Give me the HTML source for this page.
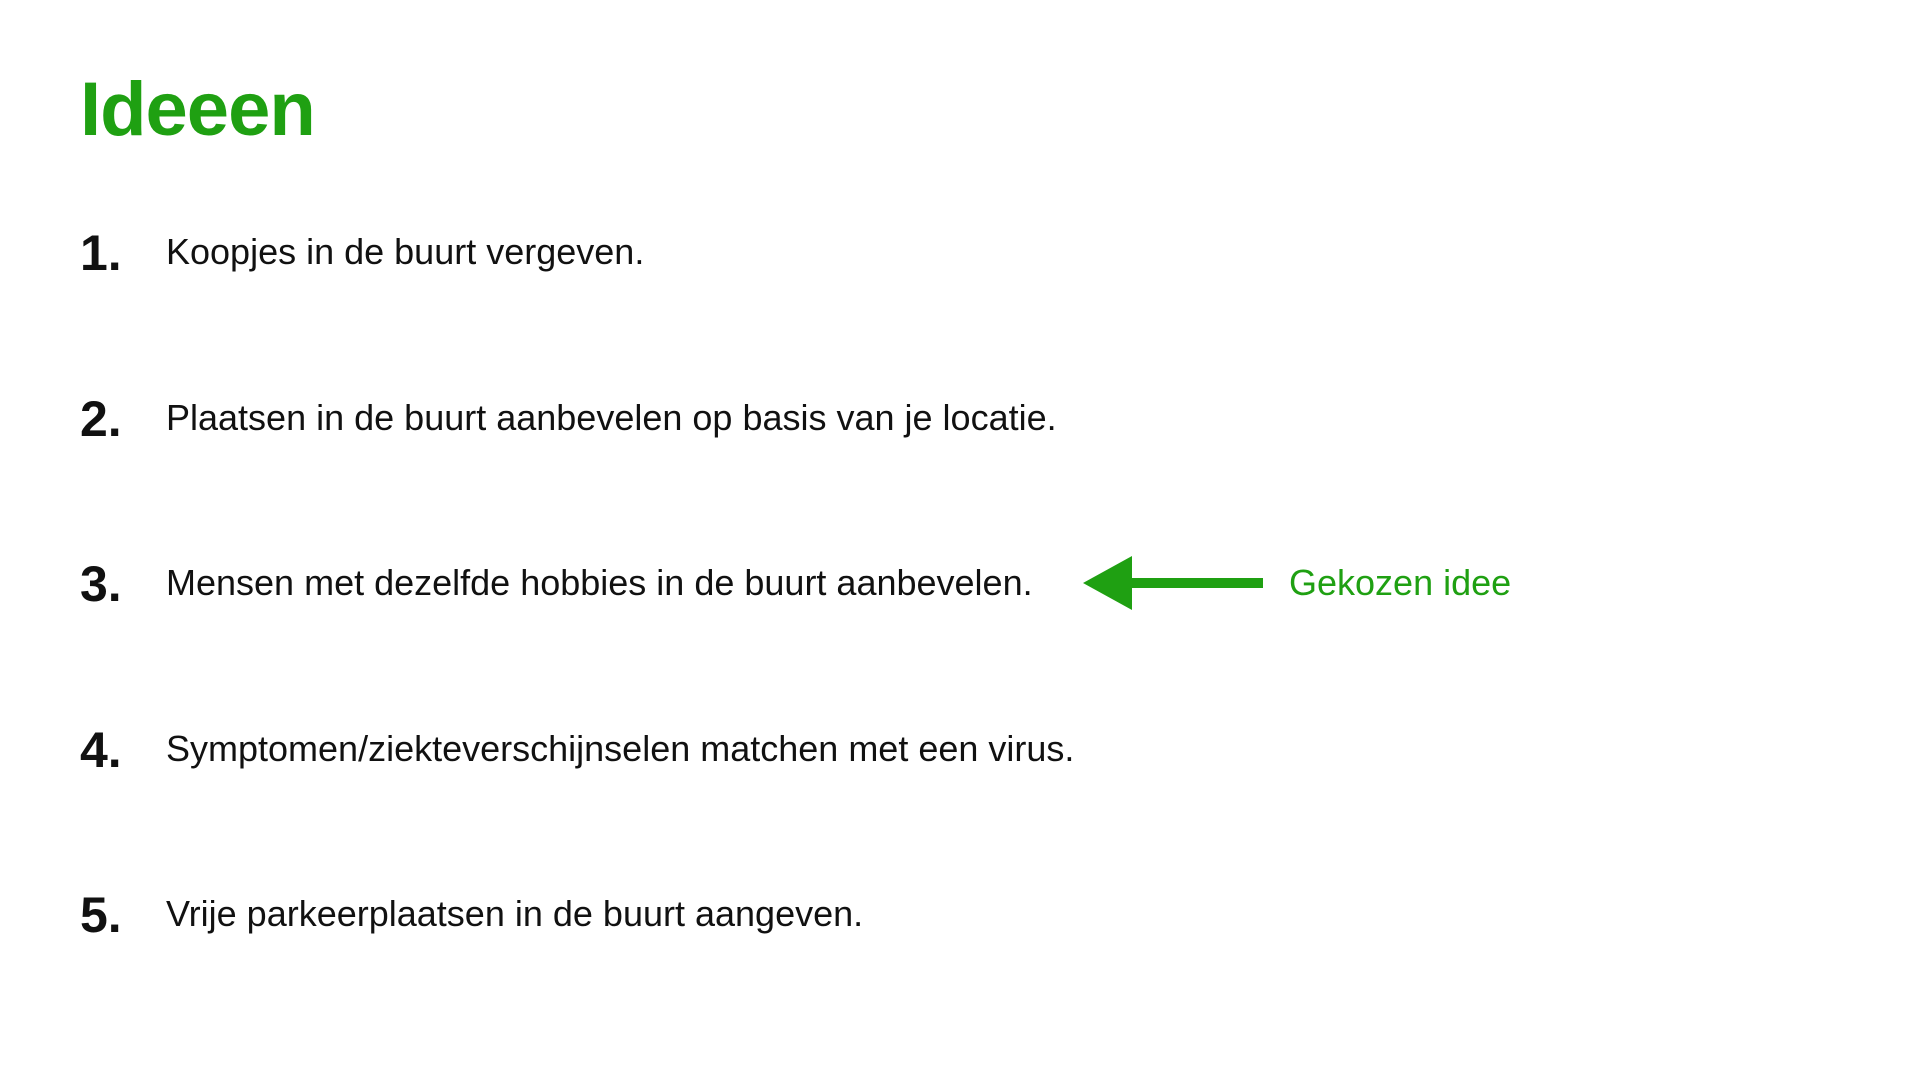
<!DOCTYPE html>
<html><head><meta charset="utf-8"><style>
html,body{margin:0;padding:0;width:1920px;height:1080px;background:#fff;overflow:hidden;font-family:"Liberation Sans",sans-serif;}
.t{position:absolute;left:80px;top:66px;font-size:76px;font-weight:bold;color:#1fa012;letter-spacing:-1px;}
.n{position:absolute;left:80px;font-size:50px;font-weight:bold;color:#111;line-height:1;}
.x{position:absolute;left:166px;font-size:36px;color:#111;line-height:1;}
.g{position:absolute;left:1289px;font-size:36px;color:#1fa012;line-height:1;}
</style></head><body>
<div class="t">Ideeen</div>
<div class="n" style="top:228px">1.</div><div class="x" style="top:234px">Koopjes in de buurt vergeven.</div>
<div class="n" style="top:394px">2.</div><div class="x" style="top:400px">Plaatsen in de buurt aanbevelen op basis van je locatie.</div>
<div class="n" style="top:559px">3.</div><div class="x" style="top:565px">Mensen met dezelfde hobbies in de buurt aanbevelen.</div>
<div class="n" style="top:725px">4.</div><div class="x" style="top:731px">Symptomen/ziekteverschijnselen matchen met een virus.</div>
<div class="n" style="top:890px">5.</div><div class="x" style="top:896px">Vrije parkeerplaatsen in de buurt aangeven.</div>
<svg style="position:absolute;left:0;top:0" width="1920" height="1080">
<polygon points="1083,583 1132,556 1132,578 1263,578 1263,588 1132,588 1132,610" fill="#1fa012"/>
</svg>
<div class="g" style="top:565px">Gekozen idee</div>
</body></html>
